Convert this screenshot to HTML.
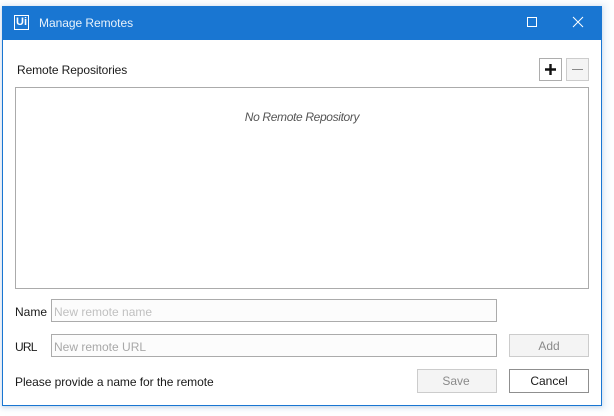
<!DOCTYPE html>
<html>
<head>
<meta charset="utf-8">
<style>
html,body{margin:0;padding:0;width:614px;height:416px;overflow:hidden;background:#fff;font-family:"Liberation Sans",sans-serif;font-size:12px;color:#1a1a1a}
.a{position:absolute;box-sizing:border-box;white-space:nowrap}
.shadow{left:0;top:2px;width:608px;height:408px;background:#f1f6fb;filter:blur(3px)}
.win{left:2px;top:6px;width:600px;height:400px;background:#fff;border:1px solid #1976d2;box-shadow:0 1px 4px rgba(60,110,170,.25)}
.tb{left:2px;top:6px;width:600px;height:34px;background:#1976d2}
.t{line-height:16px}
.box{background:#fff;border:1px solid #ababab}
.in{background:#fcfcfc;border:1px solid #ababab;padding-left:2px;line-height:24px;color:#a8a8a8}
.btn{border:1px solid #adadad;background:#fff;text-align:center;line-height:22px}
.dis{background:#f4f4f4;border-color:#cccccc;color:#8a8a8a}
</style>
</head>
<body>
<div class="a shadow"></div>
<div class="a win"></div>
<div class="a tb"></div>
<div class="a" style="left:14px;top:15px;width:15px;height:15px;border:1.5px solid #fff;color:#fff;font-size:11px;font-weight:bold;line-height:13px;text-align:center">Ui</div>
<div class="a t" style="left:39px;top:15px;color:#e8f2fb;font-size:12px;letter-spacing:-.05px">Manage Remotes</div>
<svg class="a" style="left:520px;top:10px" width="70" height="26" viewBox="0 0 70 26">
<rect x="7.500" y="7.500" width="9" height="9" fill="none" stroke="#fff" stroke-width="1"/>
<path d="M53 7 L63 17 M63 7 L53 17" stroke="#fff" stroke-width="1" fill="none"/>
</svg>
<div class="a t" style="left:17px;top:62px;letter-spacing:-.1px">Remote Repositories</div>
<div class="a btn" style="left:539px;top:58px;width:23px;height:23px"></div>
<svg class="a" style="left:539px;top:58px" width="23" height="23" viewBox="0 0 23 23"><path d="M6 11.500 H17 M11.500 6 V17" stroke="#111" stroke-width="2.400" fill="none"/></svg>
<div class="a btn dis" style="left:566px;top:58px;width:23px;height:23px"></div>
<svg class="a" style="left:566px;top:58px" width="23" height="23" viewBox="0 0 23 23"><path d="M6 11.500 H17" stroke="#8a8a8a" stroke-width="1" fill="none"/></svg>
<div class="a box" style="left:15px;top:87px;width:574px;height:202px"></div>
<div class="a t" style="left:15px;top:109px;width:574px;text-align:center;font-style:italic;color:#555;letter-spacing:-.35px">No Remote Repository</div>
<div class="a t" style="left:15px;top:304px">Name</div>
<div class="a in" style="left:51px;top:299px;width:446px;height:23px;color:#c0c0c0">New remote name</div>
<div class="a t" style="left:15px;top:339px;letter-spacing:-.8px">URL</div>
<div class="a in" style="left:51px;top:334px;width:446px;height:23px">New remote URL</div>
<div class="a btn dis" style="left:509px;top:334px;width:80px;height:23px">Add</div>
<div class="a t" style="left:15px;top:374px;letter-spacing:-.06px">Please provide a name for the remote</div>
<div class="a btn dis" style="left:417px;top:369px;width:80px;height:24px;padding-right:2px">Save</div>
<div class="a btn" style="left:509px;top:369px;width:80px;height:24px;border-color:#8f8f8f">Cancel</div>
</body>
</html>
